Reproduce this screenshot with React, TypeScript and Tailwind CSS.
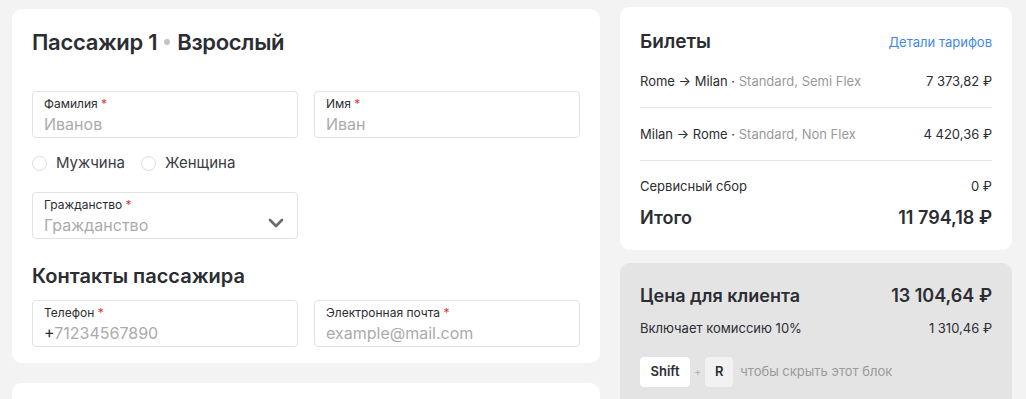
import React from "react";

const font = { fontFamily: "Inter, 'Noto Sans', sans-serif" };

function Field({ label, placeholder, prefix, chevron }: { label: string; placeholder: string; prefix?: string; chevron?: boolean }) {
  return (
    <div className="relative h-[47px] rounded-[4px] border border-[#e2e2e2] bg-white px-[11px] pt-[5px]">
      <div className="text-[12px] leading-[14px] text-[#2b2d33]">
        {label} <span className="text-[#e53935]">*</span>
      </div>
      <div className="mt-[3px] text-[16px] leading-[20px] text-[#ababab]">
        {prefix && <span className="text-[#2b2d33]">{prefix}</span>}
        {placeholder}
      </div>
      {chevron && (
        <svg className="absolute right-[13px] top-[25px]" width="16" height="10" viewBox="0 0 16 10" fill="none">
          <path d="M2 2l6 6 6-6" stroke="#6b6b6b" strokeWidth="2.6" strokeLinecap="round" strokeLinejoin="round" />
        </svg>
      )}
    </div>
  );
}

function Radio({ label }: { label: string }) {
  return (
    <div className="flex items-center gap-[9px]">
      <span className="h-[15px] w-[15px] rounded-full border border-[#dcdcdc] bg-white" />
      <span className="text-[15px] leading-[20px] text-[#3a3c42]">{label}</span>
    </div>
  );
}

function Row({ left, right, className = "" }: { left: React.ReactNode; right: string; className?: string }) {
  return (
    <div className={`flex items-center justify-between ${className}`}>
      <div>{left}</div>
      <div>{right}</div>
    </div>
  );
}

export default function App() {
  return (
    <div style={font} className="flex h-[399px] w-[1026px] items-start gap-[20px] overflow-hidden bg-[#f3f3f3] pl-[12px] pt-[7px] text-[#2b2d33]">
      <div className="mt-[2px] flex w-[588px] flex-col gap-[20px]">
        <div className="h-[354px] rounded-[10px] bg-white px-[20px] pt-[19px]">
          <div className="flex items-center text-[22px] font-semibold leading-[28px] tracking-[-0.3px]">
            <span>Пассажир 1</span>
            <span className="ml-[7px] mr-[7px] h-[6px] w-[6px] rounded-full bg-[#c4c4c4]" />
            <span>Взрослый</span>
          </div>
          <div className="mt-[35px] grid grid-cols-2 gap-[16px]">
            <Field label="Фамилия" placeholder="Иванов" />
            <Field label="Имя" placeholder="Иван" />
          </div>
          <div className="mt-[15px] flex gap-[16px]">
            <Radio label="Мужчина" />
            <Radio label="Женщина" />
          </div>
          <div className="mt-[19px] grid grid-cols-2 gap-[16px]">
            <Field label="Гражданство" placeholder="Гражданство" chevron />
          </div>
          <div className="mt-[24px] text-[20px] font-semibold leading-[26px]">Контакты пассажира</div>
          <div className="mt-[11px] grid grid-cols-2 gap-[16px]">
            <Field label="Телефон" placeholder="71234567890" prefix="+" />
            <Field label="Электронная почта" placeholder="example@mail.com" />
          </div>
        </div>
        <div className="h-[60px] rounded-[10px] bg-white" />
      </div>

      <div className="flex w-[392px] flex-col gap-[13px]">
        <div className="h-[243px] rounded-[10px] bg-white px-[20px] pt-[23px]">
          <div className="flex items-center justify-between">
            <span className="text-[19px] font-semibold leading-[24px]">Билеты</span>
            <span className="text-[13px] leading-[18px] text-[#3f88ec]">Детали тарифов</span>
          </div>
          <Row
            className="mt-[18px] text-[13px] leading-[18px]"
            left={
              <>
                Rome → Milan · <span className="text-[#9a9a9a]">Standard, Semi Flex</span>
              </>
            }
            right="7 373,82 ₽"
          />
          <div className="mt-[17px] h-px bg-[#e5e5e5]" />
          <Row
            className="mt-[17px] text-[13px] leading-[18px]"
            left={
              <>
                Milan → Rome · <span className="text-[#9a9a9a]">Standard, Non Flex</span>
              </>
            }
            right="4 420,36 ₽"
          />
          <div className="mt-[17px] h-px bg-[#e5e5e5]" />
          <Row className="mt-[16px] text-[13px] leading-[18px]" left="Сервисный сбор" right="0 ₽" />
          <Row className="mt-[11px] text-[18px] font-semibold leading-[24px]" left="Итого" right="11 794,18 ₽" />
        </div>
        <div className="h-[150px] rounded-[10px] bg-[#e4e4e4] px-[20px] pt-[21px]">
          <Row className="text-[18px] font-semibold leading-[24px]" left="Цена для клиента" right="13 104,64 ₽" />
          <Row className="mt-[11px] text-[13px] leading-[18px]" left="Включает комиссию 10%" right="1 310,46 ₽" />
          <div className="mt-[20px] flex items-center">
            <span className="flex h-[30px] w-[50px] items-center justify-center rounded-[4px] bg-white text-[13px] font-semibold">Shift</span>
            <span className="mx-[4px] text-[11px] text-[#b0b0b0]">+</span>
            <span className="flex h-[30px] w-[28px] items-center justify-center rounded-[4px] bg-[#f2f2f2] text-[13px] font-semibold">R</span>
            <span className="ml-[7px] text-[13px] text-[#9a9a9a]">чтобы скрыть этот блок</span>
          </div>
        </div>
      </div>
    </div>
  );
}
